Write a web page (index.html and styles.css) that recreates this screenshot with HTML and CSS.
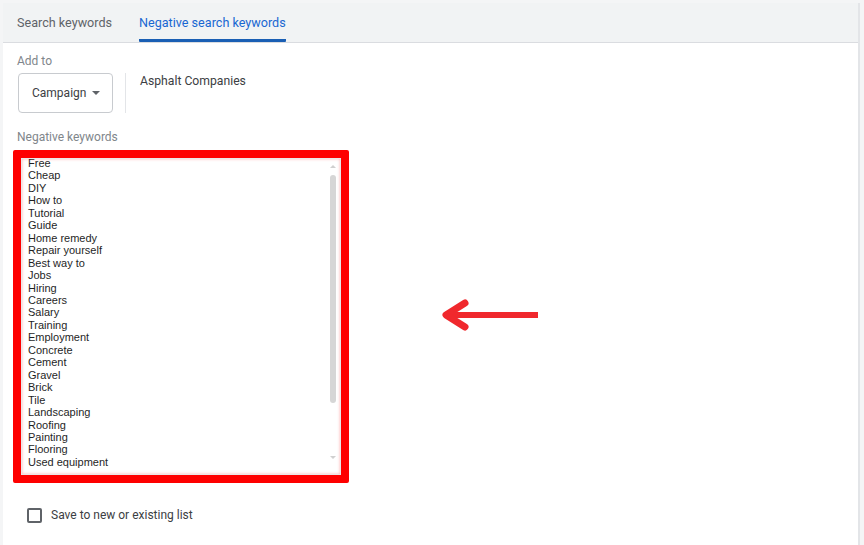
FILE: index.html
```html
<!DOCTYPE html>
<html>
<head>
<meta charset="utf-8">
<link rel="stylesheet" href="styles.css">
</head>
<body>
<div class="page">
  <div class="tabs">
    <div class="tab">Search keywords</div>
    <div class="tab active">Negative search keywords</div>
  </div>
  <div class="content">
    <div class="label">Add to</div>
    <div class="addto">
      <div class="select">Campaign <span class="caret"></span></div>
      <div class="divider"></div>
      <div class="campaign-name">Asphalt Companies</div>
    </div>
    <div class="label neg-label">Negative keywords</div>
    <div class="editor-row">
      <div class="frame">
        <div class="textarea">
          <div class="lines">
            <div>Free</div><div>Cheap</div><div>DIY</div><div>How to</div><div>Tutorial</div><div>Guide</div><div>Home remedy</div><div>Repair yourself</div><div>Best way to</div><div>Jobs</div><div>Hiring</div><div>Careers</div><div>Salary</div><div>Training</div><div>Employment</div><div>Concrete</div><div>Cement</div><div>Gravel</div><div>Brick</div><div>Tile</div><div>Landscaping</div><div>Roofing</div><div>Painting</div><div>Flooring</div><div>Used equipment</div>
          </div>
          <div class="scrollbar">
            <div class="sb-arrow up"></div>
            <div class="sb-thumb"></div>
            <div class="sb-arrow down"></div>
          </div>
        </div>
      </div>
      <svg class="arrow" width="100" height="34" viewBox="0 0 100 34">
        <line x1="7" y1="17" x2="98" y2="17" stroke="#f0282d" stroke-width="6"/>
        <polyline points="25,5 6,17 25,29" fill="none" stroke="#f0282d" stroke-width="7" stroke-linecap="round" stroke-linejoin="round"/>
      </svg>
    </div>
    <label class="check-row">
      <span class="checkbox"></span>
      <span class="check-label">Save to new or existing list</span>
    </label>
  </div>
</div>
</body>
</html>
```

FILE: styles.css
```css
html, body {
  margin: 0;
  padding: 0;
}
body {
  background: #f4f5f6;
  font-family: Roboto, "Liberation Sans", Arial, sans-serif;
  width: 864px;
  height: 545px;
  overflow: hidden;
}
.page {
  margin: 3px 0 0 3px;
  width: 857px;
  height: 542px;
  background: #ffffff;
  border-right: 2px solid #e3e5e8;
  box-sizing: border-box;
}
.tabs {
  height: 40px;
  background: #f1f3f4;
  border-bottom: 1px solid #dadce0;
  display: flex;
  align-items: stretch;
  padding-left: 14px;
  box-sizing: border-box;
  gap: 27px;
}
.tab {
  font-size: 12.6px;
  color: #5f6368;
  display: flex;
  align-items: center;
  box-sizing: border-box;
  border-bottom: 3px solid transparent;
  padding-top: 3px;
}
.tab.active {
  color: #1967d2;
  border-bottom-color: #1a5fb4;
  border-radius: 1px;
}
.content {
  padding: 10px 0 0 14px;
}
.label {
  font-size: 12px;
  line-height: 16px;
  color: #80868b;
}
.addto {
  display: flex;
  align-items: flex-start;
  margin-top: 4px;
}
.select {
  margin-left: 1px;
  width: 95px;
  height: 40px;
  box-sizing: border-box;
  border: 1px solid #c8cbcf;
  border-radius: 4px;
  font-size: 12px;
  color: #3c4043;
  display: flex;
  align-items: center;
  padding-left: 13px;
  gap: 4px;
}
.caret {
  width: 0;
  height: 0;
  border-left: 4px solid transparent;
  border-right: 4px solid transparent;
  border-top: 4px solid #5f6368;
  margin-left: 2px;
}
.divider {
  width: 1px;
  height: 40px;
  background: #e3e5e8;
  margin-left: 12px;
}
.campaign-name {
  margin-left: 14px;
  font-size: 12.2px;
  line-height: 16px;
  color: #3c4043;
}
.neg-label {
  margin-top: 16px;
}
.editor-row {
  display: flex;
  align-items: center;
  margin-top: 5px;
  margin-left: -4px;
}
.frame {
  width: 336px;
  height: 333px;
  box-sizing: border-box;
  border: 8px solid #fe0000;
  border-radius: 2px;
  background: #ffffff;
  box-shadow: inset 0 0 3px 1px rgba(255, 120, 120, 0.6);
}
.textarea {
  display: flex;
  height: 100%;
  border: 1px solid #e8e8e8;
  box-sizing: border-box;
}
.lines {
  flex: 1;
  padding-left: 6px;
  margin-top: -2px;
  font-family: "Liberation Sans", Arial, sans-serif;
  font-size: 11px;
  line-height: 12.46px;
  color: #1f1f1f;
}
.scrollbar {
  width: 8px;
  margin-right: 3px;
  display: flex;
  flex-direction: column;
  align-items: center;
  padding-top: 6px;
}
.sb-arrow {
  width: 0;
  height: 0;
  border-left: 3px solid transparent;
  border-right: 3px solid transparent;
}
.sb-arrow.up {
  border-bottom: 3px solid #d0d0d0;
}
.sb-arrow.down {
  border-top: 3px solid #d0d0d0;
  margin-top: 53px;
}
.sb-thumb {
  width: 6px;
  height: 228px;
  margin-top: 7px;
  background: #d6d6d6;
  border-radius: 3px;
}
.arrow {
  margin-left: 91px;
  margin-top: -3px;
  display: block;
}
.check-row {
  display: flex;
  align-items: center;
  margin-top: 24px;
  margin-left: 10px;
  gap: 9px;
}
.checkbox {
  width: 15px;
  height: 15px;
  box-sizing: border-box;
  border: 2px solid #5f6368;
  border-radius: 2px;
}
.check-label {
  font-size: 12px;
  color: #3c4043;
  line-height: 16px;
}
```
